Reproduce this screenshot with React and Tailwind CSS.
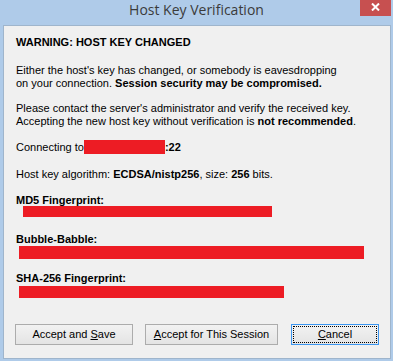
import React from 'react';

const Redacted = ({ className }) => <div className={`bg-[#ed1c24] ${className}`} />;

const DialogButton = ({ children, width, focused, className = '' }) => (
  <button
    className={`relative h-[21px] ${width} ${className} flex items-center justify-center border bg-gradient-to-b from-[#f2f2f2] to-[#e4e4e4] text-[11px] leading-[13px] text-black ${
      focused ? 'border-[#3c96f0]' : 'border-[#acacac]'
    }`}
  >
    {focused && <span className="absolute inset-[1px] border border-dotted border-black" />}
    <span className="relative">{children}</span>
  </button>
);

export default function App() {
  return (
    <div className="w-[393px] h-[361px] bg-[#afcbe9] flex flex-col font-['Liberation_Sans',Arial,sans-serif] text-[11px] text-black">
      {/* Title bar */}
      <div className="relative h-[25px] flex justify-center">
        <span className="font-['Open_Sans',sans-serif] text-[14px] leading-[19px] text-[#3b3b3b]">
          Host Key Verification
        </span>
        <button className="absolute top-0 right-[2px] w-[31px] h-[16px] bg-[#c75050] flex justify-center pt-[3px]">
          <svg width="9" height="8" viewBox="0 0 9 8">
            <path d="M1 0.5 L8 7.5 M8 0.5 L1 7.5" stroke="#fff" strokeWidth="2" />
          </svg>
        </button>
      </div>

      {/* Dialog body */}
      <div className="ml-[3px] w-[388px] h-[334px] border border-[#9fb5cc] bg-[#f0f0f0] pl-[12px] pt-[10px] leading-[13px] whitespace-nowrap">
        <div className="font-bold">WARNING: HOST KEY CHANGED</div>

        <div className="mt-[15px]">
          Either the host's key has changed, or somebody is eavesdropping
          <br />
          on your connection. <b>Session security may be compromised.</b>
        </div>

        <div className="mt-[12px]">
          Please contact the server's administrator and verify the received key.
          <br />
          Accepting the new host key without verification is <b>not recommended</b>.
        </div>

        <div className="mt-[12px] flex h-[14px] items-start">
          <span className="mt-[1px]">Connecting to</span>
          <Redacted className="w-[81px] h-[14px]" />
          <b className="mt-[1px]">:22</b>
        </div>

        <div className="mt-[14px]">
          Host key algorithm: <b>ECDSA/nistp256</b>, size: <b>256</b> bits.
        </div>

        <div className="mt-[13px] font-bold leading-[12px]">MD5 Fingerprint:</div>
        <Redacted className="ml-[7px] w-[249px] h-[11px]" />

        <div className="mt-[16px] font-bold leading-[12px]">Bubble-Babble:</div>
        <Redacted className="mt-[1px] ml-[3px] w-[345px] h-[13px]" />

        <div className="mt-[13px] font-bold leading-[12px]">SHA-256 Fingerprint:</div>
        <Redacted className="mt-[2px] ml-[3px] w-[265px] h-[12px]" />

        <div className="mt-[26px] -ml-[1px] flex">
          <DialogButton width="w-[118px]">
            Accept and <span className="underline">S</span>ave
          </DialogButton>
          <DialogButton width="w-[133px]" className="ml-[12px]">
            <span className="underline">A</span>ccept for This Session
          </DialogButton>
          <DialogButton width="w-[88px]" className="ml-[13px]" focused>
            <span className="underline">C</span>ancel
          </DialogButton>
        </div>
      </div>
    </div>
  );
}
